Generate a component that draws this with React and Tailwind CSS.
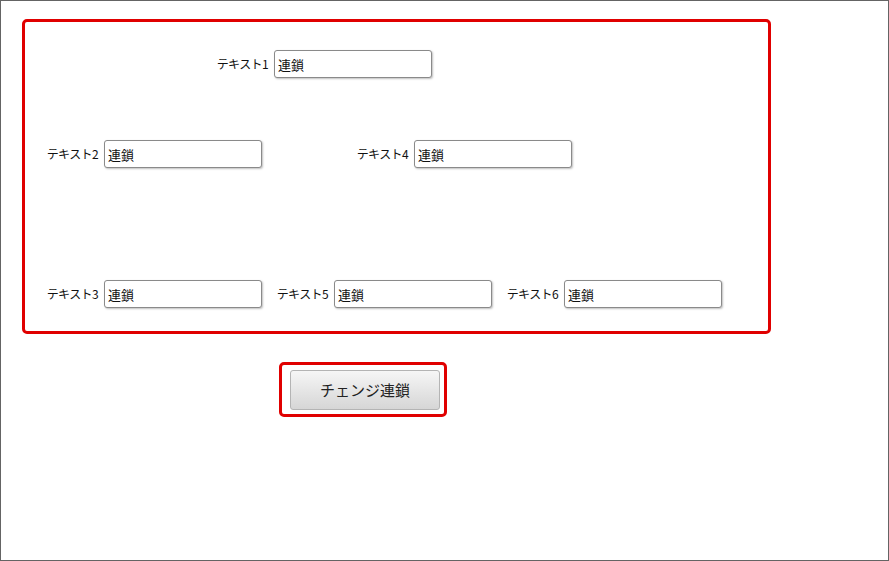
const font = { fontFamily: '"Noto Sans CJK JP", "Liberation Sans", sans-serif' }

function Field({ label, className = '' }) {
  return (
    <div className={'flex items-center ' + className}>
      <span className="w-[58px] pr-[6px] text-right text-[12px] tracking-[-0.6px] text-[#111] whitespace-nowrap">{label}</span>
      <input
        defaultValue="連鎖"
        className="w-[158px] h-[28px] px-[3px] text-[13px] text-[#111] bg-white border border-[#8a8a8a] rounded-[3px] shadow-[1px_1px_2px_rgba(0,0,0,0.25)] outline-none"
        style={font}
      />
    </div>
  )
}

export default function App() {
  return (
    <div className="w-[889px] h-[561px] box-border border border-[#646464] bg-white pl-[21px] pt-[18px]" style={font}>
      <div className="w-[749px] h-[315px] box-border border-[3px] border-[#e00000] rounded-[5px] pl-[21px] pt-[28px]">
        <div className="flex">
          <Field label="テキスト1" className="ml-[170px]" />
        </div>
        <div className="flex mt-[62px]">
          <Field label="テキスト2" />
          <Field label="テキスト4" className="ml-[94px]" />
        </div>
        <div className="flex mt-[112px] gap-[14px]">
          <Field label="テキスト3" />
          <Field label="テキスト5" />
          <Field label="テキスト6" />
        </div>
      </div>
      <div className="ml-[257px] mt-[28px] w-[168px] h-[55px] box-border border-[3px] border-[#e00000] rounded-[5px] pl-[8px] pt-[5px]">
        <button
          className="w-[150px] h-[40px] box-border border border-[#b4b4b4] rounded-[3px] bg-gradient-to-b from-[#f6f6f6] to-[#d6d6d6] text-[15px] text-[#222]"
          style={font}
        >
          チェンジ連鎖
        </button>
      </div>
    </div>
  )
}
